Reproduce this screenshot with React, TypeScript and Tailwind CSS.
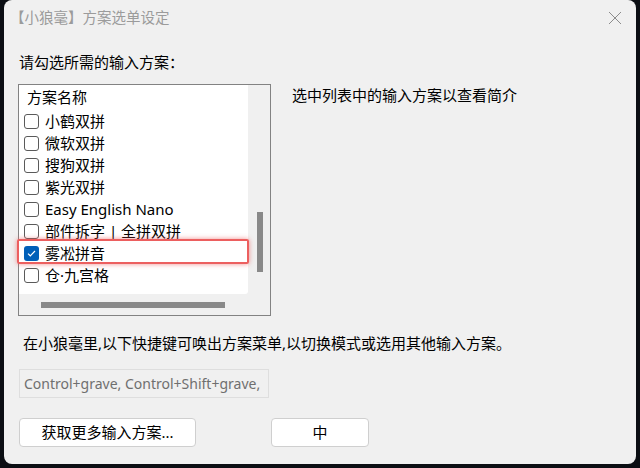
import React from 'react';

interface Scheme {
  id: string;
  name: string;
  checked: boolean;
}

const schemes: Scheme[] = [
  { id: 'flypy', name: '小鹤双拼', checked: false },
  { id: 'mspy', name: '微软双拼', checked: false },
  { id: 'sogou', name: '搜狗双拼', checked: false },
  { id: 'ziguang', name: '紫光双拼', checked: false },
  { id: 'easy_en', name: 'Easy English Nano', checked: false },
  { id: 'radical', name: '部件拆字 | 全拼双拼', checked: false },
  { id: 'ice', name: '雾凇拼音', checked: true },
  { id: 't9', name: '仓·九宫格', checked: false },
];

const font = "font-['Noto_Sans','Noto_Sans_CJK_SC',sans-serif]";

function CheckBox({ checked }: { checked: boolean }) {
  if (checked) {
    return (
      <span className="flex h-[15px] w-[15px] shrink-0 items-center justify-center rounded-[3px] bg-[#005fb8]">
        <svg width="9" height="7" viewBox="0 0 9 7" fill="none">
          <path d="M1 3.6 L3.3 5.8 L8 1" stroke="white" strokeWidth="1.2" />
        </svg>
      </span>
    );
  }
  return <span className="h-[15px] w-[15px] shrink-0 rounded-[3px] border border-[#5a5a5a] bg-white" />;
}

export default function App() {
  return (
    <div className={`flex h-[468px] w-[640px] bg-[#0b0e13] pb-[4px] pl-[4px] pr-[4px] ${font}`}>
      <div className="flex h-[464px] w-[632px] flex-col rounded-[8px] bg-[#f0f0f0]">
        {/* title bar */}
        <div className="flex h-[36px] items-center justify-between pl-[6px] pr-[14px]">
          <span className="text-[14.5px] text-[#9b9b9b]">【小狼毫】方案选单设定</span>
          <svg width="14" height="14" viewBox="0 0 14 14">
            <path d="M1 1 L13 13 M13 1 L1 13" stroke="#8c8c8c" strokeWidth="1" />
          </svg>
        </div>

        <div className="mt-[16px] pl-[15px] text-[15px] leading-[20px] text-black">请勾选所需的输入方案：</div>

        <div className="mt-[12px] flex pl-[14px]">
          {/* scheme list */}
          <div className="relative flex h-[232px] w-[253px] flex-col border border-[#828282] bg-[#f0f0f0]">
            <div className="flex h-[209px]">
              <div className="w-[229px] overflow-hidden rounded-br-[3px] bg-white">
                <div className="flex h-[25px] items-center pl-[8px] text-[15px] text-black">方案名称</div>
                {schemes.map((s) => (
                  <div key={s.id} className="flex h-[22px] items-center gap-[6px] pl-[5px] text-[15px] text-black">
                    <CheckBox checked={s.checked} />
                    <span className="whitespace-nowrap">{s.name}</span>
                  </div>
                ))}
              </div>
              <div className="flex w-[22px] justify-center pl-[2px] pt-[127px]">
                <div className="h-[60px] w-[6px] bg-[#898989]" />
              </div>
            </div>
            <div className="flex h-[21px] items-center pl-[22px]">
              <div className="h-[6px] w-[184px] bg-[#898989]" />
            </div>
            <div className="absolute left-[-2px] top-[154px] h-[25px] w-[232px] rounded-[2px] border-2 border-[#ec5f5f] shadow-[0_0_5px_rgba(236,95,95,0.7)]" />
          </div>

          <div className="pl-[21px] pt-[1px] text-[15px] leading-[20px] text-black">选中列表中的输入方案以查看简介</div>
        </div>

        <div className="mt-[17px] pl-[19px] text-[15px] leading-[20px] text-black">
          在小狼毫里,以下快捷键可唤出方案菜单,以切换模式或选用其他输入方案。
        </div>

        <div className="ml-[15px] mt-[16px] flex h-[29px] w-[250px] items-center border border-[#dedede] pl-[4px] text-[14px] text-[#6f6f6f]">
          Control+grave, Control+Shift+grave,
        </div>

        <div className="mt-[20px] flex pl-[15px]">
          <button className="h-[29px] w-[177px] rounded-[4px] border border-[#cfcfcf] bg-white text-[15px] text-black">
            获取更多输入方案...
          </button>
          <button className="ml-[75px] h-[29px] w-[98px] rounded-[4px] border border-[#cfcfcf] bg-white text-[15px] text-black">
            中
          </button>
        </div>
      </div>
    </div>
  );
}
